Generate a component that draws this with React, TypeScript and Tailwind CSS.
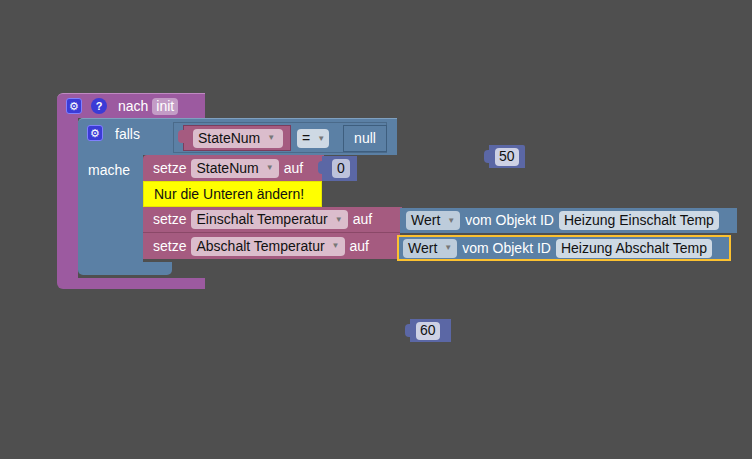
import React from "react";

const Gear = () => (
  <div className="w-[16px] h-[16px] bg-[#3b3bd6] rounded-[3px] border border-[#8080ff] flex items-center justify-center text-white text-[11px] leading-none">⚙</div>
);
const Pill = ({ t, dd = true, cls = "" }: { t: string; dd?: boolean; cls?: string }) => (
  <span className={"inline-flex items-center h-[19px] rounded-[4px] bg-white/60 px-[5px] text-[#111] " + cls}>
    {t}
    {dd && <span className="ml-[7px] text-[8px] text-[#777]">▼</span>}
  </span>
);

export default function App() {
  return (
    <div className="relative w-[752px] h-[459px] bg-[#4f4f4f] overflow-hidden text-[14px] text-white" style={{ fontFamily: '"Liberation Sans", Arial, sans-serif' }}>
      {/* purple event block */}
      <div className="absolute left-[57px] top-[93px] w-[148px] h-[25px] bg-[#9c5aa0] rounded-tl-[6px] flex items-center pl-[9px] gap-[9px] border-t border-[#c08ac3]">
        <Gear />
        <div className="w-[16px] h-[16px] rounded-full bg-[#3b3bd6] text-white text-[11px] font-bold flex items-center justify-center">?</div>
        <span className="ml-[2px]">nach</span>
        <span className="-ml-[5px] inline-flex items-center h-[17px] px-[4px] rounded-[4px] bg-white/40">init</span>
      </div>
      <div className="absolute left-[57px] top-[118px] w-[21px] h-[162px] bg-[#9c5aa0]" />
      <div className="absolute left-[57px] top-[278px] w-[148px] h-[11px] bg-[#9c5aa0] rounded-bl-[6px]" />
      {/* blue if block */}
      <div className="absolute left-[78px] top-[118px] w-[319px] h-[37px] bg-[#5b80a5] rounded-tl-[5px] flex items-start pt-[6px] pl-[9px] border-t border-[#7fa0c0]">
        <Gear />
        <span className="ml-[12px] -mt-[1px]">falls</span>
      </div>
      <div className="absolute left-[78px] top-[155px] w-[65px] h-[110px] bg-[#5b80a5] pl-[10px] pt-[5px]">mache</div>
      <div className="absolute left-[78px] top-[262px] w-[94px] h-[13px] bg-[#5b80a5] rounded-b-[5px]" />
      {/* condition */}
      <div className="absolute left-[173px] top-[122px] w-[214px] h-[31px] border border-[#4a6a8a] bg-[#5b80a5]" />
      <div className="absolute left-[183px] top-[125px] w-[108px] h-[26px] bg-[#a55b80] border border-[#7a3d5d] flex items-center pl-[9px]">
        <Pill t="StateNum" cls="pr-[8px]" />
      </div>
      <div className="absolute left-[297px] top-[128px]"><Pill t="=" cls="bg-white/70 pr-[4px]" /></div>
      <div className="absolute left-[343px] top-[125px] w-[44px] h-[27px] border border-[#3e5e7e] flex items-center justify-center">null</div>
      {/* setze StateNum */}
      <div className="absolute left-[143px] top-[155px] w-[181px] h-[26px] bg-[#a55b80] rounded-tl-[4px] flex items-center pl-[10px] gap-[5px]">
        setze <Pill t="StateNum" /> auf
      </div>
      <div className="absolute left-[322px] top-[156px] w-[35px] h-[25px] bg-[#5b67a5] flex items-center pl-[10px]">
        <span className="inline-flex items-center h-[19px] px-[5px] rounded-[4px] bg-white/60 text-[#111]">0</span>
      </div>
      {/* comment */}
      <div className="absolute left-[143px] top-[181px] w-[179px] h-[26px] bg-[#ffff00] border border-[#e6e600] flex items-center pl-[10px] text-[#111]">
        Nur die Unteren ändern!
      </div>
      {/* setze Einschalt */}
      <div className="absolute left-[143px] top-[207px] w-[259px] h-[26px] bg-[#a55b80] flex items-center pl-[10px] gap-[5px] border-b border-[#8a4868]">
        setze <Pill t="Einschalt Temperatur" /> auf
      </div>
      <div className="absolute left-[400px] top-[208px] w-[337px] h-[25px] bg-[#5b80a5] flex items-center pl-[6px] gap-[5px]">
        <Pill t="Wert" /> vom Objekt ID <Pill t="Heizung Einschalt Temp" dd={false} cls="bg-white/70" />
      </div>
      {/* setze Abschalt */}
      <div className="absolute left-[143px] top-[233px] w-[257px] h-[26px] bg-[#a55b80] flex items-center pl-[10px] gap-[5px]">
        setze <Pill t="Abschalt Temperatur" /> auf
      </div>
      <div className="absolute left-[397px] top-[235px] w-[334px] h-[26px] bg-[#5b80a5] border-[2px] border-[#fcc12f] flex items-center pl-[4px] gap-[5px]">
        <Pill t="Wert" /> vom Objekt ID <Pill t="Heizung Abschalt Temp" dd={false} cls="bg-white/70" />
      </div>
      {/* loose numbers */}
      <div className="absolute left-[489px] top-[145px] w-[36px] h-[23px] bg-[#5b67a5] rounded-tr-[2px] flex items-center pl-[6px]">
        <span className="inline-flex items-center h-[18px] px-[4px] rounded-[4px] bg-white/70 text-[#111]">50</span>
      </div>
      <div className="absolute left-[410px] top-[319px] w-[41px] h-[23px] bg-[#5b67a5] flex items-center pl-[6px]">
        <span className="inline-flex items-center h-[18px] px-[4px] rounded-[4px] bg-white/70 text-[#111]">60</span>
      </div>
      {/* puzzle tabs */}
      <div className="absolute left-[484px] top-[150px] w-[6px] h-[13px] bg-[#5b67a5] rounded-l-[4px]" />
      <div className="absolute left-[405px] top-[324px] w-[6px] h-[13px] bg-[#5b67a5] rounded-l-[4px]" />
      <div className="absolute left-[318px] top-[161px] w-[6px] h-[13px] bg-[#5b67a5] rounded-l-[4px]" />
      <div className="absolute left-[178px] top-[130px] w-[6px] h-[13px] bg-[#a55b80] rounded-l-[4px]" />
    </div>
  );
}
